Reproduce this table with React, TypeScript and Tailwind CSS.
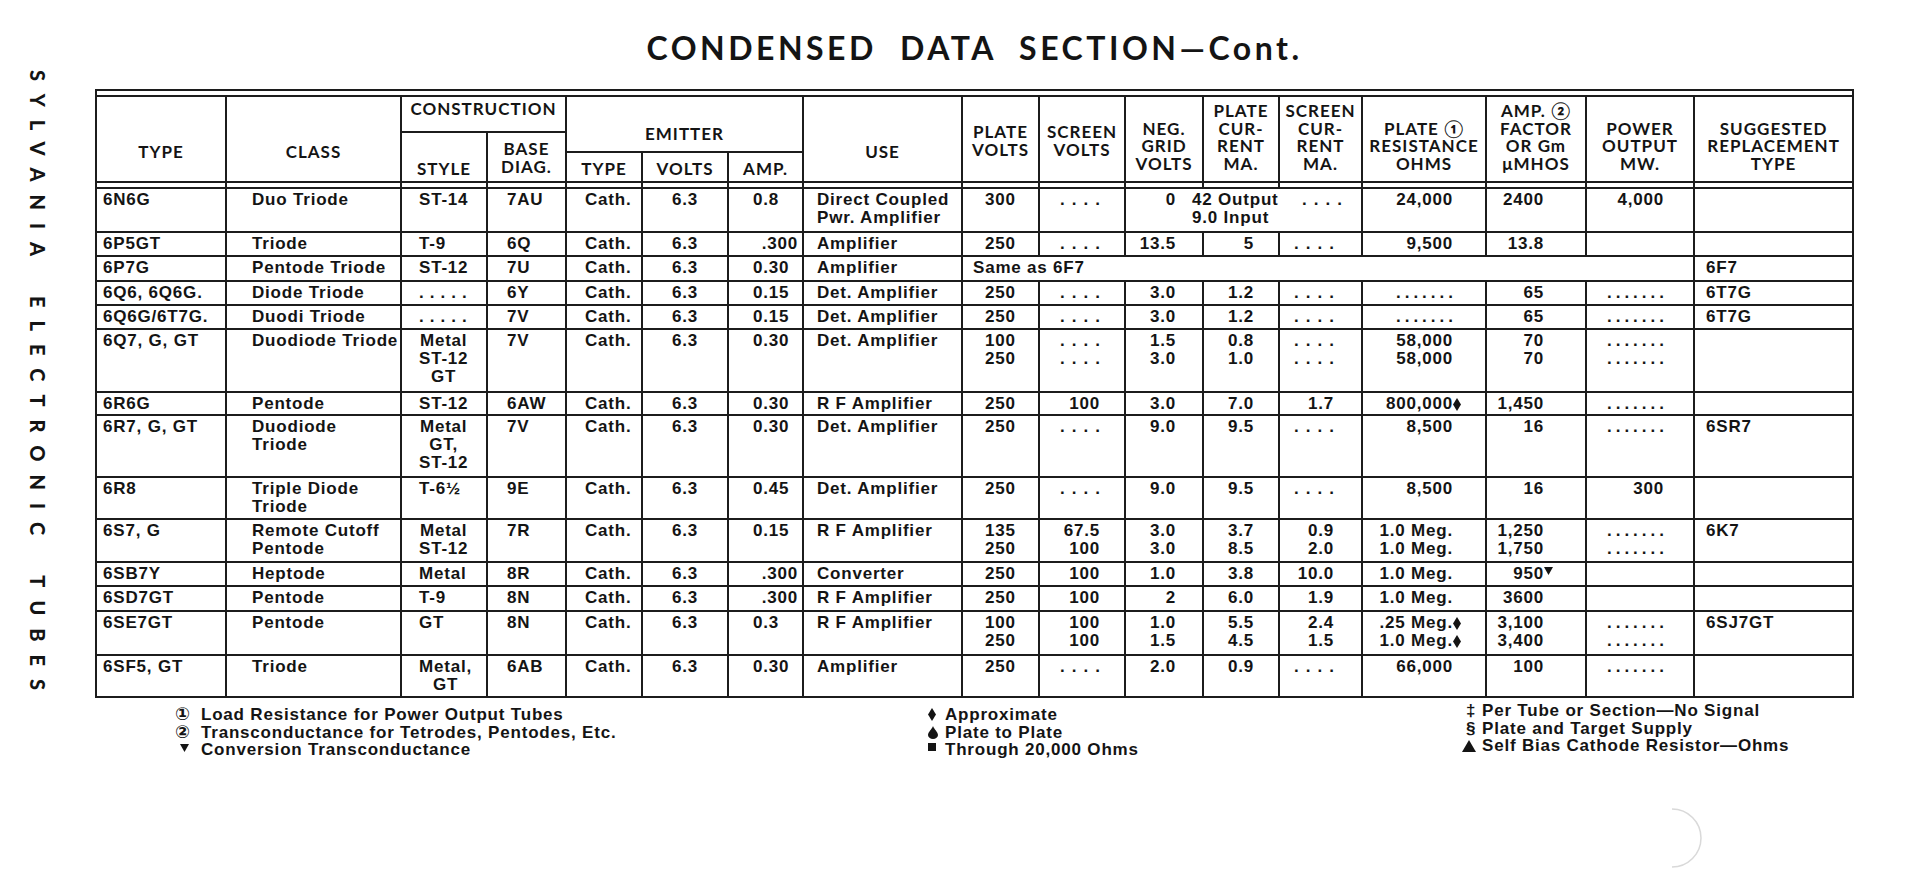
/**
 * CONDENSED DATA SECTION — tube data sheet page
 */

import React from 'react';

type Cell = string | { v?: string; node?: React.ReactNode; span?: number; cls?: string };

const colCls = [
  'pl-[6px] text-left',
  'pl-[25px] text-left',
  'pl-[17px] text-left',
  'pl-[19px] text-left',
  'pl-[18px] text-left',
  'text-center',
  'pl-[24px] text-left',
  'pl-[13px] text-left',
  'text-center',
  'pr-[24px] text-right',
  'pr-[26px] text-right',
  'pr-[24px] text-right',
  'pr-[27px] text-right',
  'pr-[32px] text-right',
  'pr-[41px] text-right',
  'pr-[29px] text-right',
  'pl-[11px] text-left',
];

// little printer's marks, drawn so their size doesn't depend on font fallback
const Diamond = () => (
  <svg width="8" height="13" viewBox="0 0 8 13" className="inline-block">
    <path d="M4 0 L8 6.5 L4 13 L0 6.5 Z" fill="#141414" />
  </svg>
);
const DownTri = () => (
  <svg width="9" height="8" viewBox="0 0 9 8" className="inline-block">
    <path d="M0 0 H9 L4.5 8 Z" fill="#141414" />
  </svg>
);
const UpTri = () => (
  <svg width="14" height="12" viewBox="0 0 14 12" className="inline-block">
    <path d="M7 0 L14 12 H0 Z" fill="#141414" />
  </svg>
);
const Teardrop = () => (
  <svg width="10" height="13" viewBox="0 0 10 13" className="inline-block">
    <path d="M5 0 C6 3 10 6 10 9 A5 4 0 0 1 0 9 C0 6 4 3 5 0 Z" fill="#141414" />
  </svg>
);
const Square = () => (
  <svg width="8" height="8" viewBox="0 0 8 8" className="inline-block">
    <rect width="8" height="8" fill="#141414" />
  </svg>
);

const Dots: React.FC<{ n: number }> = ({ n }) => {
  if (n === 4) return <span className="inline-block tracking-[7px] -mr-[7px]">....</span>;
  if (n === 5) return <span className="inline-block tracking-[6px] -mr-[6px]">.....</span>;
  return <span className="inline-block tracking-[4px] -mr-[4px]">.......</span>;
};

const Line: React.FC<{ text: string }> = ({ text }) => {
  const m = text.match(/^~(\d)$/);
  if (m) return <div><Dots n={Number(m[1])} /></div>;
  const last = text.slice(-1);
  if (last === '♦' || last === '▼') {
    return (
      <div>
        {text.slice(0, -1)}
        <span className="inline-block w-0 text-left">
          {last === '♦' ? <Diamond /> : <span className="relative -top-[4px]"><DownTri /></span>}
        </span>
      </div>
    );
  }
  return <div>{text}</div>;
};

const Merged6N6G = (
  <div className="flex">
    <div className="w-[50px] text-right">0</div>
    <div className="ml-[16px] w-[110px]">
      <div>42 Output</div>
      <div>9.0 Input</div>
    </div>
    <Dots n={4} />
  </div>
);

const amp300 = { v: '.300', cls: 'text-right pr-[4px]' };

const rows: { h: string; cells: Cell[] }[] = [
  { h: 'h-[44px]', cells: ['6N6G', 'Duo Triode', 'ST-14', '7AU', 'Cath.', '6.3', '0.8', 'Direct Coupled|Pwr. Amplifier', '300', '~4', { node: Merged6N6G, span: 3, cls: 'text-left' }, '24,000', '2400', '4,000', ''] },
  { h: 'h-[24px]', cells: ['6P5GT', 'Triode', 'T-9', '6Q', 'Cath.', '6.3', amp300, 'Amplifier', '250', '~4', '13.5', '5', '~4', '9,500', '13.8', '', ''] },
  { h: 'h-[25px]', cells: ['6P7G', 'Pentode Triode', 'ST-12', '7U', 'Cath.', '6.3', '0.30', 'Amplifier', { v: 'Same as 6F7', span: 8, cls: 'text-left pl-[10px]' }, '6F7'] },
  { h: 'h-[24px]', cells: ['6Q6, 6Q6G.', 'Diode Triode', '~5', '6Y', 'Cath.', '6.3', '0.15', 'Det. Amplifier', '250', '~4', '3.0', '1.2', '~4', '~7', '65', '~7', '6T7G'] },
  { h: 'h-[24px]', cells: ['6Q6G/6T7G.', 'Duodi Triode', '~5', '7V', 'Cath.', '6.3', '0.15', 'Det. Amplifier', '250', '~4', '3.0', '1.2', '~4', '~7', '65', '~7', '6T7G'] },
  { h: 'h-[63px]', cells: ['6Q7, G, GT', 'Duodiode Triode', 'Metal|ST-12|GT', '7V', 'Cath.', '6.3', '0.30', 'Det. Amplifier', '100|250', '~4|~4', '1.5|3.0', '0.8|1.0', '~4|~4', '58,000|58,000', '70|70', '~7|~7', ''] },
  { h: 'h-[23px]', cells: ['6R6G', 'Pentode', 'ST-12', '6AW', 'Cath.', '6.3', '0.30', 'R F Amplifier', '250', '100', '3.0', '7.0', '1.7', '800,000♦', '1,450', '~7', ''] },
  { h: 'h-[62px]', cells: ['6R7, G, GT', 'Duodiode|Triode', 'Metal|GT,|ST-12', '7V', 'Cath.', '6.3', '0.30', 'Det. Amplifier', '250', '~4', '9.0', '9.5', '~4', '8,500', '16', '~7', '6SR7'] },
  { h: 'h-[42px]', cells: ['6R8', 'Triple Diode|Triode', 'T-6½', '9E', 'Cath.', '6.3', '0.45', 'Det. Amplifier', '250', '~4', '9.0', '9.5', '~4', '8,500', '16', '300', ''] },
  { h: 'h-[43px]', cells: ['6S7, G', 'Remote Cutoff|Pentode', 'Metal|ST-12', '7R', 'Cath.', '6.3', '0.15', 'R F Amplifier', '135|250', '67.5|100', '3.0|3.0', '3.7|8.5', '0.9|2.0', '1.0 Meg.|1.0 Meg.', '1,250|1,750', '~7|~7', '6K7'] },
  { h: 'h-[24px]', cells: ['6SB7Y', 'Heptode', 'Metal', '8R', 'Cath.', '6.3', amp300, 'Converter', '250', '100', '1.0', '3.8', '10.0', '1.0 Meg.', '950▼', '', ''] },
  { h: 'h-[25px]', cells: ['6SD7GT', 'Pentode', 'T-9', '8N', 'Cath.', '6.3', amp300, 'R F Amplifier', '250', '100', '2', '6.0', '1.9', '1.0 Meg.', '3600', '', ''] },
  { h: 'h-[44px]', cells: ['6SE7GT', 'Pentode', 'GT', '8N', 'Cath.', '6.3', '0.3', 'R F Amplifier', '100|250', '100|100', '1.0|1.5', '5.5|4.5', '2.4|1.5', '.25 Meg.♦|1.0 Meg.♦', '3,100|3,400', '~7|~7', '6SJ7GT'] },
  { h: 'h-[42px]', cells: ['6SF5, GT', 'Triode', 'Metal,|GT', '6AB', 'Cath.', '6.3', '0.30', 'Amplifier', '250', '~4', '2.0', '0.9', '~4', '66,000', '100', '~7', ''] },
];

const bd = 'border-2 border-[#1c1c1c]';
const th = `${bd} p-0 text-center font-bold text-[17px] leading-[17.5px] tracking-[1px] font-['Lato','Liberation_Sans','DejaVu_Sans',sans-serif] whitespace-nowrap`;
const td = `${bd} p-0 pt-[2px] align-top whitespace-nowrap`;

const BodyRow: React.FC<{ h: string; cells: Cell[] }> = ({ h, cells }) => {
  let col = 0;
  return (
    <tr className={h}>
      {cells.map((c, i) => {
        const idx = col;
        const cell = typeof c === 'string' ? { v: c } : c;
        const span = cell.span ?? 1;
        col += span;
        const lines = cell.v !== undefined ? cell.v.split('|').filter((l) => l !== '') : [];
        const content = cell.node ?? (idx === 2 && lines.length > 0
          ? <span className="inline-block text-center">{lines.map((l, k) => <Line key={k} text={l} />)}</span>
          : lines.map((l, k) => <Line key={k} text={l} />));
        return (
          <td key={i} colSpan={span > 1 ? span : undefined} className={`${td} ${cell.cls ?? colCls[idx]}`}>
            {content}
          </td>
        );
      })}
    </tr>
  );
};

const Note: React.FC<{ sym: React.ReactNode; w: string; children: React.ReactNode }> = ({ sym, w, children }) => (
  <div className="flex items-center h-[17.5px]">
    <span className={`${w} shrink-0 flex items-center`}>{sym}</span>
    <span>{children}</span>
  </div>
);

export default function App() {
  return (
    <div className="relative flex w-[1913px] h-[878px] overflow-hidden bg-white text-[#141414]">
      <aside className="w-[95px] shrink-0 pt-[70px] pl-[27px]">
        <div className="[writing-mode:vertical-rl] leading-[22px] text-[20px] font-black tracking-[13px] [word-spacing:10px] font-['Lato','Liberation_Sans',sans-serif] whitespace-nowrap">
          SYLVANIA ELECTRONIC TUBES
        </div>
      </aside>

      <main className="flex flex-col w-[1759px] shrink-0">
        <h1 className="pt-[32px] text-center text-[32px] leading-[32px] font-bold tracking-[3.5px] [word-spacing:12px] font-['Lato','Liberation_Sans',sans-serif]">
          CONDENSED DATA SECTION—Cont.
        </h1>

        <table className="mt-[25px] w-[1759px] table-fixed border-collapse font-['Liberation_Sans','DejaVu_Sans','Noto_Sans_CJK_JP',sans-serif] font-bold text-[17px] leading-[18px] tracking-[0.8px]">
          <colgroup>
            <col className="w-[130px]" />
            <col className="w-[175px]" />
            <col className="w-[86px]" />
            <col className="w-[79px]" />
            <col className="w-[76px]" />
            <col className="w-[86px]" />
            <col className="w-[75px]" />
            <col className="w-[159px]" />
            <col className="w-[77px]" />
            <col className="w-[86px]" />
            <col className="w-[78px]" />
            <col className="w-[76px]" />
            <col className="w-[83px]" />
            <col className="w-[124px]" />
            <col className="w-[100px]" />
            <col className="w-[108px]" />
            <col className="w-[159px]" />
          </colgroup>
          <thead>
            <tr className="h-[6px]">
              <td colSpan={17} className="p-0 border-t-2 border-x-2 border-[#1c1c1c]" />
            </tr>
            <tr className="h-[36px]">
              <th rowSpan={3} className={`${th} align-bottom pb-[21px]`}>TYPE</th>
              <th rowSpan={3} className={`${th} align-bottom pb-[21px]`}>CLASS</th>
              <th colSpan={2} className={`${th} align-top pt-[3px]`}>CONSTRUCTION</th>
              <th colSpan={3} rowSpan={2} className={`${th} align-bottom pb-[9px]`}>EMITTER</th>
              <th rowSpan={3} className={`${th} align-bottom pb-[21px]`}>USE</th>
              <th rowSpan={3} className={`${th} align-bottom pb-[23px]`}>PLATE<br />VOLTS</th>
              <th rowSpan={3} className={`${th} align-bottom pb-[23px]`}>SCREEN<br />VOLTS</th>
              <th rowSpan={3} className={`${th} align-bottom pb-[9px]`}>NEG.<br />GRID<br />VOLTS</th>
              <th rowSpan={3} className={`${th} align-bottom pb-[9px]`}>PLATE<br />CUR-<br />RENT<br />MA.</th>
              <th rowSpan={3} className={`${th} align-bottom pb-[9px]`}>SCREEN<br />CUR-<br />RENT<br />MA.</th>
              <th rowSpan={3} className={`${th} align-bottom pb-[9px]`}>PLATE ①<br />RESISTANCE<br />OHMS</th>
              <th rowSpan={3} className={`${th} align-bottom pb-[9px]`}>AMP. ②<br />FACTOR<br />OR Gm<br />μMHOS</th>
              <th rowSpan={3} className={`${th} align-bottom pb-[9px]`}>POWER<br />OUTPUT<br />MW.</th>
              <th rowSpan={3} className={`${th} align-bottom pb-[9px]`}>SUGGESTED<br />REPLACEMENT<br />TYPE</th>
            </tr>
            <tr className="h-[20px]">
              <th rowSpan={2} className={`${th} align-bottom pb-[4px]`}>STYLE</th>
              <th rowSpan={2} className={`${th} align-bottom pb-[6px]`}>BASE<br />DIAG.</th>
            </tr>
            <tr className="h-[30px]">
              <th className={`${th} align-bottom pb-[4px]`}>TYPE</th>
              <th className={`${th} align-bottom pb-[4px]`}>VOLTS</th>
              <th className={`${th} align-bottom pb-[4px]`}>AMP.</th>
            </tr>
            <tr className="h-[6px]">
              {Array.from({ length: 17 }).map((_, i) => (
                <td key={i} className={`${bd} p-0`} />
              ))}
            </tr>
          </thead>
          <tbody>
            {rows.map((r, i) => (
              <BodyRow key={i} h={r.h} cells={r.cells} />
            ))}
          </tbody>
        </table>

        <div className="flex mt-[8px] pl-[80px] font-['Liberation_Sans','DejaVu_Sans','Noto_Sans_CJK_JP',sans-serif] font-bold text-[17px] tracking-[0.8px] whitespace-nowrap">
          <div className="w-[753px] shrink-0">
            <Note sym={<span className="text-[18px]">①</span>} w="w-[26px]">Load Resistance for Power Output Tubes</Note>
            <Note sym={<span className="text-[18px]">②</span>} w="w-[26px]">Transconductance for Tetrodes, Pentodes, Etc.</Note>
            <Note sym={<span className="pl-[5px] -mt-[4px] flex"><DownTri /></span>} w="w-[26px]">Conversion Transconductance</Note>
          </div>
          <div className="w-[534px] shrink-0">
            <Note sym={<Diamond />} w="w-[17px]">Approximate</Note>
            <Note sym={<Teardrop />} w="w-[17px]">Plate to Plate</Note>
            <Note sym={<span className="-mt-[6px] flex"><Square /></span>} w="w-[17px]">Through 20,000 Ohms</Note>
          </div>
          <div className="-mt-[4px]">
            <Note sym={<span className="pl-[4px]">‡</span>} w="w-[20px]">Per Tube or Section—No Signal</Note>
            <Note sym={<span className="pl-[4px]">§</span>} w="w-[20px]">Plate and Target Supply</Note>
            <Note sym={<UpTri />} w="w-[20px]">Self Bias Cathode Resistor—Ohms</Note>
          </div>
        </div>
      </main>

      <svg width="50" height="64" viewBox="0 0 50 64" className="absolute left-[1660px] top-[806px]">
        <path d="M12 3 A28 28 0 0 1 12 61" fill="none" stroke="#d9d9d9" strokeWidth="1.5" />
      </svg>
    </div>
  );
}
